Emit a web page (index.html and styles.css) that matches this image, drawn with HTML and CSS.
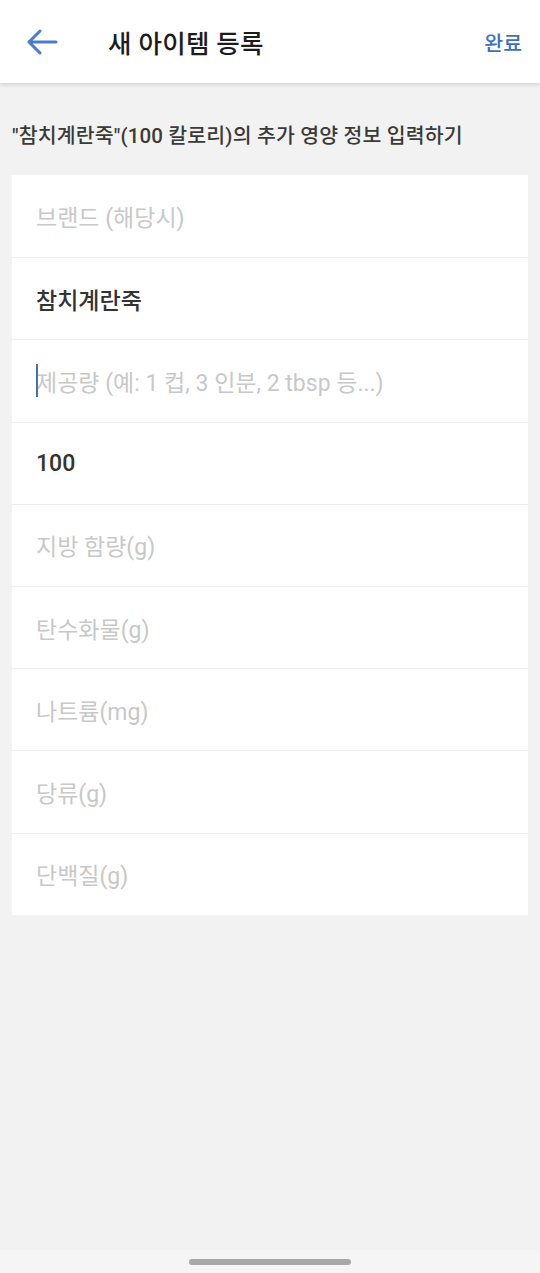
FILE: index.html
```html
<!DOCTYPE html>
<html lang="ko">
<head>
    <meta charset="UTF-8">
    <meta name="viewport" content="width=device-width, initial-scale=1.0">
    <title>새 아이템 등록</title>
    <link rel="stylesheet" href="styles.css">
</head>
<body>
    <div class="topbar">
        <button class="back" aria-label="뒤로">
            <svg width="32" height="26" viewBox="0 0 32 26">
                <path d="M30 13H3M14 2L3 13l11 11" fill="none" stroke="#4a7cc7" stroke-width="3" stroke-linecap="round" stroke-linejoin="round"/>
            </svg>
        </button>
        <h1 class="title">새 아이템 등록</h1>
        <span class="done">완료</span>
    </div>

    <p class="intro">"참치계란죽"(100 칼로리)의 추가 영양 정보 입력하기</p>

    <div class="form">
        <div class="row placeholder">브랜드 (해당시)</div>
        <div class="row value">참치계란죽</div>
        <div class="row placeholder"><span class="caret"></span>제공량 (예: 1 컵, 3 인분, 2 tbsp 등...)</div>
        <div class="row value">100</div>
        <div class="row placeholder">지방 함량(g)</div>
        <div class="row placeholder">탄수화물(g)</div>
        <div class="row placeholder">나트륨(mg)</div>
        <div class="row placeholder">당류(g)</div>
        <div class="row placeholder">단백질(g)</div>
    </div>

    <div class="navbar">
        <div class="pill"></div>
    </div>
</body>
</html>
```

FILE: styles.css
```css
/* 새 아이템 등록 화면 */
body {
    font-family: Roboto, "Noto Sans CJK KR", sans-serif;
    background-color: #f2f2f2;
    color: #333;
    margin: 0;
    height: 1273px;
    display: flex;
    flex-direction: column;
}
.topbar {
    height: 83px;
    flex-shrink: 0;
    background: #ffffff;
    display: flex;
    align-items: center;
    padding: 0 18px 0 26px;
    box-shadow: 0 2px 4px rgba(0, 0, 0, 0.12);
    position: relative;
    z-index: 1;
}
.back {
    border: none;
    background: none;
    padding: 0;
    width: 32px;
    height: 26px;
    display: flex;
}
.title {
    font-size: 25.5px;
    font-weight: 500;
    color: #1c1c1c;
    margin: 0 0 0 50px;
    flex: 1;
    letter-spacing: 0.3px;
}
.done {
    font-size: 20.5px;
    font-weight: 500;
    color: #3e70b8;
}
.intro {
    margin: 36px 12px 26px;
    font-size: 20.5px;
    font-weight: 500;
    color: #3a3a3a;
    letter-spacing: 0.15px;
}
.form {
    margin: 0 12px;
    background: #ffffff;
}
.row {
    height: 82.2px;
    box-sizing: border-box;
    border-top: 1px solid #efefef;
    display: flex;
    align-items: center;
    padding-left: 24px;
    font-size: 23px;
    position: relative;
}
.row:first-child {
    border-top: none;
}
.placeholder {
    color: #c8c8c8;
}
.value {
    color: #333;
    font-weight: 500;
}
.caret {
    position: absolute;
    left: 24px;
    top: 24px;
    width: 2px;
    height: 33px;
    background: #4a6fa5;
}
.navbar {
    margin-top: auto;
    height: 23px;
    background: #f5f5f5;
    display: flex;
    justify-content: center;
    padding-top: 9px;
    box-sizing: border-box;
}
.pill {
    width: 162px;
    height: 6px;
    border-radius: 3px;
    background: #a8a8a8;
}
```
